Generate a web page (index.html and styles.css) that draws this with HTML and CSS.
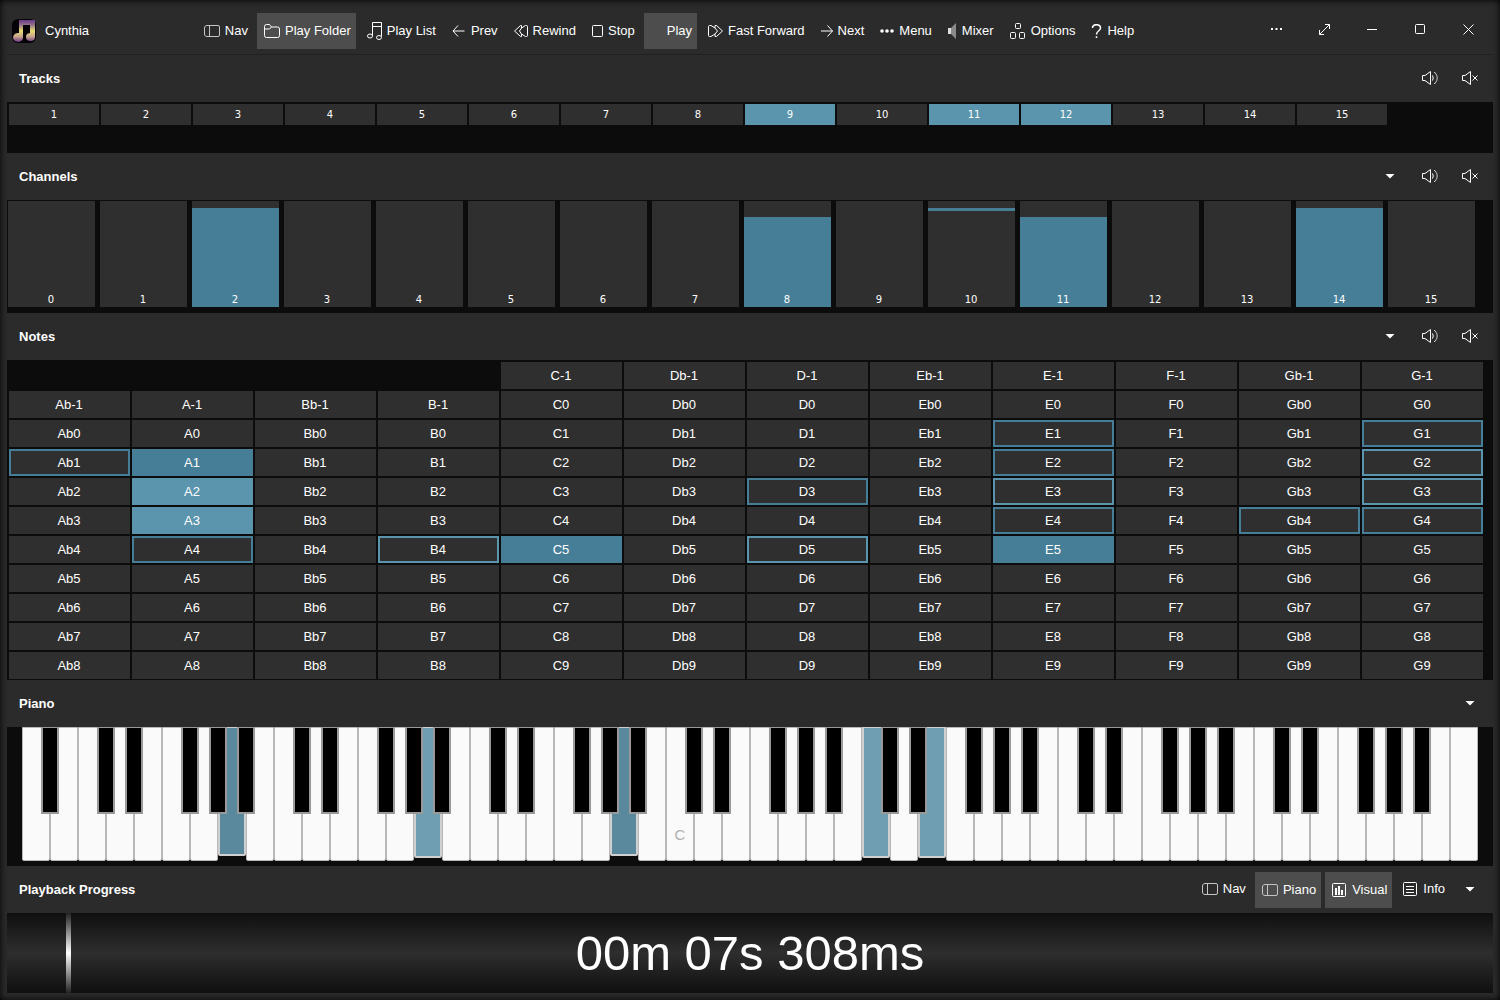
FILE: index.html
```html
<!DOCTYPE html>
<html lang="en">
<head>
<meta charset="utf-8">
<meta name="viewport" content="width=device-width, initial-scale=1">
<title>Cynthia</title>
<link rel="stylesheet" href="styles.css">
</head>
<body>
<svg class="sprite" aria-hidden="true">
  <symbol id="i-nav" viewBox="0 0 16 14"><path d="M6 1.500H3C1.500 1.500.5 2.500.5 4v6c0 1.500 1 2.500 2.500 2.500h3M5.500 1v12M5.500 1.500H14a1.500 1.500 0 0 1 1.500 1.500v8a1.500 1.500 0 0 1-1.500 1.500H5.500" stroke="#c4c4c4"/></symbol>
  <symbol id="i-speaker" viewBox="0 0 16 16"><path d="M.5 5.500v5H3l5.500 4V1.500L3 5.500z"/><path d="M10.500 5.500q1.500 2.500 0 5"/><path d="M12 2.500h1q4.500 5.500 0 11h-1" stroke="#ccc"/></symbol>
  <symbol id="i-muted" viewBox="0 0 16 16"><path d="M.5 5.500v5H3l5.500 4V1.500L3 5.500zM10.500 5.500l5 5M15.500 5.500l-5 5"/></symbol>
  <symbol id="i-caret" viewBox="0 0 10 5"><path d="M.5 0h9L5 4.500z" fill="#fff" stroke="none"/></symbol>
</svg>

<div class="app">
  <header class="titlebar">
    <div class="brand">
      <svg class="logo" width="24" height="24" viewBox="0 0 24 24">
        <defs><linearGradient id="note" x1="0" y1="0" x2="0" y2="1"><stop offset="0" stop-color="#6b3a86"/><stop offset=".2" stop-color="#8d6a8c"/><stop offset=".5" stop-color="#e6dc70"/><stop offset=".75" stop-color="#c9a68c"/><stop offset="1" stop-color="#6b3a86"/></linearGradient></defs>
        <rect width="24" height="24" rx="6" fill="#050308"/>
        <path d="M7 1h16v17a4.500 4 0 1 1-5-4V6h-7v13a5 4.500 0 1 1-4-5z" fill="url(#note)"/>
      </svg>
      <span>Cynthia</span>
    </div>
    <nav class="toolbar">
      <button class="tool"><svg width="16" height="14"><use href="#i-nav"/></svg>Nav</button>
      <button class="tool active"><svg width="16" height="14" viewBox="0 0 16 14"><path d="M.5 11.500V2.500q0-2 2-2h3l2 2.500h6q2 0 2 2v6.500q0 2-2 2h-11q-2 0-2-2zM.5 5h5l2-2"/></svg>Play Folder</button>
      <button class="tool"><svg width="15" height="18" viewBox="0 0 15 18"><path d="M5.500 13.500V.5h9v14M5.500 4.500h9"/><ellipse cx="3" cy="14" rx="2.500" ry="2"/><ellipse cx="12" cy="15.500" rx="2.500" ry="2"/></svg>Play List</button>
      <button class="tool"><svg width="14" height="12" viewBox="0 0 14 12"><path d="M6 .5L1 6l5 5.500M1 6h11.500"/></svg>Prev</button>
      <button class="tool"><svg width="14" height="12" viewBox="0 0 14 12"><path d="M6.500.5L.5 6l6 5.500h1v-2.500L5.500 6 7.500 3V.5zM7.500 3l4-2.500h1q1 0 1 1v9q0 1-1 1h-1L7.500 9"/></svg>Rewind</button>
      <button class="tool"><svg width="11" height="12" viewBox="0 0 11 12"><rect x=".5" y=".5" width="10" height="11" rx="1"/></svg>Stop</button>
      <button class="tool active"><svg width="11" height="12"></svg>Play</button>
      <button class="tool"><svg width="15" height="12" viewBox="0 0 15 12"><path d="M8.500.5l6 5.500-6 5.500H7V9l2.500-3L7 3V.500zM7 3L3 .5H1.500q-1 0-1 1v9q0 1 1 1H3L7 9"/></svg>Fast Forward</button>
      <button class="tool"><svg width="12" height="12" viewBox="0 0 12 12"><path d="M6.500.5l5 5.500-5 5.500M11.500 6H0"/></svg>Next</button>
      <button class="tool"><svg width="14" height="4" viewBox="0 0 14 4"><g fill="#fff" stroke="none"><circle cx="2" cy="2" r="1.800"/><circle cx="7" cy="2" r="1.800"/><circle cx="12" cy="2" r="1.800"/></g></svg>Menu</button>
      <button class="tool"><svg width="9" height="16" viewBox="0 0 9 16"><path d="M0 5h3v6H0z" fill="#ddd" stroke="none"/><path d="M3 5l5-5v16l-5-5z" fill="#8a8a8a" stroke="none"/></svg>Mixer</button>
      <button class="tool"><svg width="16" height="16" viewBox="0 0 16 16"><rect x="5.500" y=".5" width="5" height="5" rx="1"/><rect x=".5" y="9.500" width="5" height="6" rx="1"/><rect x="9.500" y="9.500" width="5" height="6" rx="1"/></svg>Options</button>
      <button class="tool"><svg width="11" height="14" viewBox="0 0 11 14"><path d="M1.500 4Q1.500.700 5.500.700T9.500 4q0 1.500-2 3t-2 3.500" stroke-width="1.500"/><path d="M4.700 12.300h1.600v1.700H4.700z" fill="#fff" stroke="none"/></svg>Help</button>
    </nav>
    <div class="window-buttons">
      <button aria-label="More"><svg width="11" height="2" viewBox="0 0 11 2"><path d="M0 1h2M4.500 1h2M9 1h2" stroke-width="2"/></svg></button>
      <button aria-label="Expand"><svg width="11" height="11" viewBox="0 0 11 11"><path d="M.5 10.500l10-10M6 .5h4.500V5M.5 6v4.500H5"/></svg></button>
      <button aria-label="Minimise"><svg width="10" height="1" viewBox="0 0 10 1"><path d="M0 .5h10"/></svg></button>
      <button aria-label="Maximise"><svg width="10" height="10" viewBox="0 0 10 10"><rect x=".5" y=".5" width="9" height="9" rx="1"/></svg></button>
      <button aria-label="Close"><svg width="11" height="11" viewBox="0 0 11 11"><path d="M.5.5l10 10M10.500.500l-10 10"/></svg></button>
    </div>
  </header>

  <main>
    <section>
      <div class="section-head"><h2>Tracks</h2>
        <button class="icon-button" aria-label="Unmute all tracks"><svg width="16" height="16"><use href="#i-speaker"/></svg></button>
        <button class="icon-button" aria-label="Mute all tracks"><svg width="16" height="16"><use href="#i-muted"/></svg></button>
      </div>
      <div class="panel tracks" id="tracks"></div>
    </section>
    <section>
      <div class="section-head"><h2>Channels</h2>
        <button class="icon-button" aria-label="Channel options"><svg width="10" height="5"><use href="#i-caret"/></svg></button>
        <button class="icon-button" aria-label="Unmute all channels"><svg width="16" height="16"><use href="#i-speaker"/></svg></button>
        <button class="icon-button" aria-label="Mute all channels"><svg width="16" height="16"><use href="#i-muted"/></svg></button>
      </div>
      <div class="panel channels" id="channels"></div>
    </section>
    <section>
      <div class="section-head"><h2>Notes</h2>
        <button class="icon-button" aria-label="Note options"><svg width="10" height="5"><use href="#i-caret"/></svg></button>
        <button class="icon-button" aria-label="Unmute all notes"><svg width="16" height="16"><use href="#i-speaker"/></svg></button>
        <button class="icon-button" aria-label="Mute all notes"><svg width="16" height="16"><use href="#i-muted"/></svg></button>
      </div>
      <div class="panel notes" id="notes"></div>
    </section>
    <section>
      <div class="section-head"><h2>Piano</h2>
        <button class="icon-button" aria-label="Piano options"><svg width="10" height="5"><use href="#i-caret"/></svg></button>
      </div>
      <div class="panel piano" id="piano"></div>
    </section>
    <section>
      <div class="section-head"><h2>Playback Progress</h2>
        <div class="view-tools">
          <button class="tool"><svg width="16" height="14"><use href="#i-nav"/></svg>Nav</button>
          <button class="tool active"><svg width="16" height="14"><use href="#i-nav"/></svg>Piano</button>
          <button class="tool active"><svg width="15" height="14" viewBox="0 0 15 14"><rect x=".5" y=".5" width="13" height="13" rx="1"/><path d="M4 12V5M7 12V3M10 12V7" stroke-width="2"/></svg>Visual</button>
          <button class="tool"><svg width="15" height="14" viewBox="0 0 15 14"><rect x=".5" y=".5" width="13" height="13" rx="1"/><path d="M3 4.500h8M3 7.500h8M3 10.500h8"/></svg>Info</button>
        </div>
        <button class="icon-button" aria-label="Progress options"><svg width="10" height="5"><use href="#i-caret"/></svg></button>
      </div>
      <div class="progress"><div class="playhead" style="left:4%"></div><time>00m 07s 308ms</time></div>
    </section>
  </main>
</div>
<script src="script.js"></script>
</body>
</html>
```
FILE: styles.css
```css
* { box-sizing: border-box; }

body {
  margin: 0;
  background: #2b2b2b;
  color: #fff;
  font: 13px/16px "Liberation Sans", Arial, sans-serif;
}

button {
  margin: 0;
  padding: 0;
  border: 0;
  background: none;
  color: inherit;
  font: inherit;
}

svg { flex: none; fill: none; stroke: #fff; }
.sprite { position: absolute; width: 0; height: 0; }
.logo { stroke: none; }

.app {
  min-height: 100vh;
  padding: 0 7px 7px;
  background: #2b2b2b;
  box-shadow: inset 0 0 7px #000;
}

.titlebar {
  display: flex;
  height: 55px;
  padding-top: 8px;
  align-items: center;
  border-bottom: 1px solid #202020;
}
.brand { display: flex; align-items: center; gap: 9px; padding: 0 0 1px 5px; }
.toolbar {
  flex: 1;
  display: flex;
  justify-content: center;
  gap: 4px;
  padding-right: 5px;
}
.tool {
  display: flex;
  align-items: center;
  gap: 5px;
  height: 36px;
  padding: 0 5px 1px 7px;
  white-space: nowrap;
}
.tool.active { padding-bottom: 0; background: #4d4d4d; }
.window-buttons { display: flex; padding: 0 1px 4px 0; }
.window-buttons button {
  display: flex;
  align-items: center;
  justify-content: center;
  width: 48px;
  height: 36px;
}

.section-head {
  display: flex;
  align-items: center;
  height: 47px;
  padding: 0 3px 0 12px;
}
.section-head h2 { flex: 1; margin: 0; font-size: 13px; font-weight: bold; }
.icon-button {
  display: flex;
  align-items: center;
  justify-content: center;
  width: 40px;
  height: 36px;
  padding-bottom: 1px;
}
.view-tools { display: flex; gap: 4px; }

.panel { background: #0c0c0c; }

.tracks {
  display: grid;
  grid-template-columns: repeat(16, 1fr);
  gap: 2px;
  height: 51px;
  padding: 2px 14px 0 2px;
}
.track,
.channel {
  background: #2f2f2f;
  font-family: "DejaVu Sans", Verdana, sans-serif;
  font-size: 10px;
}
.track { height: 21px; }
.track.on { background: #5a94ad; }

.channels {
  display: grid;
  grid-template-columns: repeat(16, 1fr);
  gap: 5px;
  height: 113px;
  padding: 1px 18px 6px 1px;
}
.channel {
  position: relative;
  display: flex;
  align-items: flex-end;
  justify-content: center;
  padding-right: 1px;
  line-height: 14px;
}
.level {
  position: absolute;
  right: 0;
  bottom: 0;
  left: 0;
  background: #467e97;
}
.level.peak { border-top: 3px solid #467e97; background: none; }
.channel span { position: relative; }

.notes {
  display: grid;
  grid-template-columns: repeat(12, 1fr);
  gap: 2px;
  padding: 2px 10px 1px 2px;
}
.note { height: 27px; padding-right: 1px; background: #2f2f2f; }
.note.first { grid-column-start: 5; }
.note.held { border: 2px solid #467e97; }
.note.held.bright { border-color: #5a94ad; }
.note.on { background: #467e97; }
.note.on.bright { background: #5a94ad; }

.piano { display: flex; height: 139px; padding: 0 15px 5px; }
.slot { position: relative; flex: 1; }
.white {
  display: flex;
  align-items: flex-end;
  justify-content: center;
  width: 100%;
  height: 134px;
  padding-bottom: 17px;
  border: 1px solid #b8b8b8;
  border-radius: 0 0 2px 2px;
  background: #fafafa;
  color: #b0b0b0;
  font-size: 15px;
}
.white.soft { height: 131px; border: 2px solid #d0d0d0; border-top-width: 1px; background: #6f9db2; }
.white.hard { height: 129px; border: 2px solid #d0d0d0; border-top-width: 1px; background: #5a899e; }
.black {
  position: absolute;
  z-index: 1;
  top: 0;
  right: -9px;
  width: 18px;
  height: 87px;
  border: 2px solid #999;
  border-top-width: 1px;
  background: #000;
}

.progress {
  position: relative;
  display: flex;
  align-items: center;
  justify-content: center;
  height: 80px;
  background: linear-gradient(#0f0f0f, #2e2e2e, #0f0f0f);
}
.playhead {
  position: absolute;
  top: 0;
  bottom: 0;
  width: 5px;
  background: linear-gradient(#222, #fff, #222);
}
.progress time { font-size: 49px; line-height: 56px; }
```
FILE: script.js
```js
const add = (parent, tag, className, text) => {
  const el = document.createElement(tag);
  el.className = className;
  if (text !== undefined) el.textContent = text;
  parent.append(el);
  return el;
};

// Tracks
const tracks = document.getElementById("tracks");
const playingTracks = [9, 11, 12];
for (let n = 1; n <= 15; n++) {
  add(tracks, "button", playingTracks.includes(n) ? "track on" : "track", n);
}

// Channels: level as a percentage of the cell height
const channels = document.getElementById("channels");
const levels = { 2: 93, 8: 85, 10: 93, 11: 85, 14: 93 };
for (let n = 0; n < 16; n++) {
  const cell = add(channels, "button", "channel");
  if (levels[n]) {
    add(cell, "div", n === 10 ? "level peak" : "level").style.height = levels[n] + "%";
  }
  add(cell, "span", "", n);
}

// Notes: the lowest octave starts at C
const notes = document.getElementById("notes");
const names = ["Ab", "A", "Bb", "B", "C", "Db", "D", "Eb", "E", "F", "Gb", "G"];
const noteStates = {
  Ab1: "held", A1: "on", A2: "on bright", A3: "on bright", A4: "held",
  B4: "held bright", C5: "on", D3: "held", D5: "held bright",
  E1: "held", E2: "held", E3: "held bright", E4: "held", E5: "on",
  Gb4: "held", G1: "held", G2: "held bright", G3: "held bright", G4: "held"
};
for (let row = 0; row < 11; row++) {
  names.forEach((name, col) => {
    if (row === 0 && col < 4) return;
    const label = name + (col < 4 ? row - 2 : row - 1);
    const first = row === 0 && col === 4 ? " first" : "";
    add(notes, "button", "note " + (noteStates[label] || "") + first, label);
  });
}

// Piano: 52 white keys from A to C
const piano = document.getElementById("piano");
const pressed = { 7: "hard", 14: "soft", 21: "hard", 30: "soft", 32: "soft" };
for (let i = 0; i < 52; i++) {
  const letter = "ABCDEFG"[i % 7];
  const slot = add(piano, "div", "slot");
  const key = add(slot, "button", "white " + (pressed[i] || ""), i === 23 ? "C" : "");
  key.setAttribute("aria-label", letter);
  if (letter !== "B" && letter !== "E" && i < 51) {
    add(slot, "button", "black").setAttribute("aria-label", letter + " sharp");
  }
}
```
